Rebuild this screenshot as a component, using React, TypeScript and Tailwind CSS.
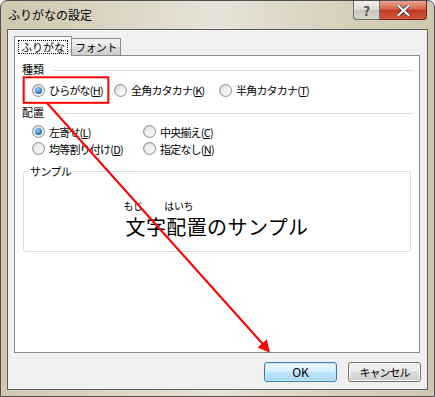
import React from "react";

const jp = "font-['Noto_Sans_CJK_JP',sans-serif]";

function Radio({ checked }: { checked?: boolean }) {
  return (
    <span className="flex h-[13px] w-[13px] shrink-0 items-center justify-center rounded-full border border-[#8e8f8f] bg-[linear-gradient(135deg,#cfcfcf,#f7f7f7)]">
      <span className="flex h-[9px] w-[9px] items-center justify-center rounded-full bg-[linear-gradient(135deg,#e2e2e2,#fdfdfd)]">
        {checked && (
          <span className="h-[7px] w-[7px] rounded-full bg-[radial-gradient(circle_at_40%_35%,#a6d8ff,#2a77c6_60%,#154f8a)]" />
        )}
      </span>
    </span>
  );
}

function Option({ label, mn, checked, w }: { label: string; mn: string; checked?: boolean; w?: string }) {
  return (
    <div className={`flex items-center gap-[4px] ${w ?? ""}`}>
      <Radio checked={checked} />
      <span className="text-[11px] leading-[14px] tracking-[-0.8px] text-black">
        {label}(<span className="underline">{mn}</span>)
      </span>
    </div>
  );
}

function Section({ title }: { title: string }) {
  return (
    <div className="flex h-[14px] items-center pl-[7px] pr-[6px]">
      <span className="text-[11px] leading-[14px]">{title}</span>
      <span className="ml-[8px] mt-[2px] h-px flex-1 bg-[#d5dfe5]" />
    </div>
  );
}

function Ruby({ base, rt }: { base: string; rt: string }) {
  return (
    <span className="flex flex-col">
      <span className="-ml-[2px] h-[11px] text-[10px] leading-[11px] tracking-[-0.4px]">{rt}</span>
      <span className="mt-[5px] text-[20px] leading-[22px] tracking-[0.4px]">{base}</span>
    </span>
  );
}

export default function App() {
  return (
    <div className={`relative h-[397px] w-[435px] overflow-hidden ${jp}`}>
      {/* ウィンドウ枠 */}
      <div className="flex h-full w-full flex-col rounded-t-[7px] border border-[#4f4f4f] bg-[linear-gradient(90deg,#cfc7af_0%,#ddd7c7_30%,#e7e3d8_50%,#d9d2bf_75%,#cfc7af_100%)]">
        {/* タイトルバー */}
        <div className="flex h-[28px] shrink-0 items-start">
          <span className="ml-[7px] mt-[7px] text-[12px] leading-[14px] text-black">ふりがなの設定</span>
          <div className="ml-auto mr-[7px] flex h-[19px]">
            <div className="flex w-[27px] items-center justify-center rounded-bl-[4px] border border-t-0 border-[#6b6b6b] bg-[linear-gradient(180deg,#f1efe9_0%,#dedbd3_50%,#c9c5bb_51%,#d9d6cd_100%)] text-[13px] font-bold leading-none text-[#4a4f58]">
              ?
            </div>
            <div className="flex w-[47px] items-center justify-center rounded-br-[4px] border border-l-0 border-t-0 border-[#6b2a20] bg-[linear-gradient(180deg,#e8a493_0%,#d4644c_45%,#c23a22_52%,#d0573d_100%)]">
              <svg width="13" height="11" viewBox="0 0 13 11">
                <path d="M1.5 1 L11.5 10 M11.5 1 L1.5 10" stroke="#3a3a3a" strokeWidth="3.6" strokeLinecap="square" />
                <path d="M1.5 1 L11.5 10 M11.5 1 L1.5 10" stroke="#ffffff" strokeWidth="2" strokeLinecap="square" />
              </svg>
            </div>
          </div>
        </div>

        {/* クライアント領域 */}
        <div className="mx-[6px] flex h-[361px] shrink-0 flex-col border border-[#5e5e5e] bg-[#f0f0f0]">
          {/* タブ */}
          <div className="flex h-[25px] items-end pl-[6px]">
            <div className="relative z-10 -mb-px flex h-[20px] w-[58px] items-start justify-center border border-b-0 border-[#898c95] bg-white pt-[3px]">
              <span className="border border-dotted border-black px-[2px] text-[11px] leading-[12px]">ふりがな</span>
            </div>
            <div className="-ml-px flex h-[17px] w-[50px] items-start justify-center border border-b-0 border-[#898c95] bg-[linear-gradient(180deg,#f2f2f2_0%,#ebebeb_45%,#dddddd_50%,#cfcfcf_100%)] pt-px text-[11px] leading-[14px] tracking-[-0.5px]">
              フォント
            </div>
          </div>

          {/* タブパネル */}
          <div className="ml-[6px] flex h-[298px] w-[406px] flex-col border border-[#898c95] bg-white text-black">
            <div className="mt-[6px]">
              <Section title="種類" />
            </div>
            <div className="mt-[5px] flex h-[18px] items-center pl-[17px]">
              <Option label="ひらがな" mn="H" checked w="w-[82px]" />
              <Option label="全角カタカナ" mn="K" w="w-[105px]" />
              <Option label="半角カタカナ" mn="T" />
            </div>
            <div className="mt-[6px]">
              <Section title="配置" />
            </div>
            <div className="mt-[4px] flex h-[17px] items-center pl-[17px]">
              <Option label="左寄せ" mn="L" checked w="w-[111px]" />
              <Option label="中央揃え" mn="C" />
            </div>
            <div className="flex h-[17px] items-center pl-[17px]">
              <Option label="均等割り付け" mn="D" w="w-[111px]" />
              <Option label="指定なし" mn="N" />
            </div>

            <fieldset className="ml-[8px] mt-[7px] h-[88px] w-[388px] rounded-[3px] border border-[#d5dfe5] px-0">
              <legend className="ml-[5px] px-px text-[11px] leading-[14px] tracking-[-0.6px]">サンプル</legend>
              <div className="mt-[22px] flex justify-center">
                <div className="flex">
                  <Ruby base="文字" rt="もじ" />
                  <Ruby base="配置" rt="はいち" />
                  <span className="mt-[16px] text-[20px] leading-[22px] tracking-[0.4px]">のサンプル</span>
                </div>
              </div>
            </fieldset>
          </div>

          {/* ボタン */}
          <div className="mt-[9px] flex justify-end gap-[11px] pr-[6px]">
            <button className="flex h-[20px] w-[73px] items-center justify-center rounded-[3px] border border-[#3c7fb1] bg-[linear-gradient(180deg,#eaf6fd_0%,#d9f0fc_45%,#bee6fd_50%,#a7d9f5_100%)] text-[12px] leading-none shadow-[inset_0_0_0_1px_#c4e5f6]">
              OK
            </button>
            <button className="flex h-[20px] w-[73px] items-center justify-center rounded-[3px] border border-[#707070] bg-[linear-gradient(180deg,#f2f2f2_0%,#ebebeb_45%,#dddddd_50%,#cfcfcf_100%)] text-[11px] leading-none tracking-[-1px] shadow-[inset_0_0_0_1px_#fcfcfc]">
              キャンセル
            </button>
          </div>
        </div>
      </div>

      {/* 注釈（赤枠と矢印） */}
      <svg className="pointer-events-none absolute left-0 top-0" width="435" height="397" viewBox="0 0 435 397">
        <rect x="23.7" y="77.3" width="84.6" height="25.5" fill="none" stroke="#ff0000" strokeWidth="2" />
        <line x1="47" y1="103" x2="265" y2="346.5" stroke="#ff0000" strokeWidth="2" />
        <polygon points="270,352.7 257.6,347.6 266.8,339.4" fill="#ff0000" />
      </svg>
    </div>
  );
}
